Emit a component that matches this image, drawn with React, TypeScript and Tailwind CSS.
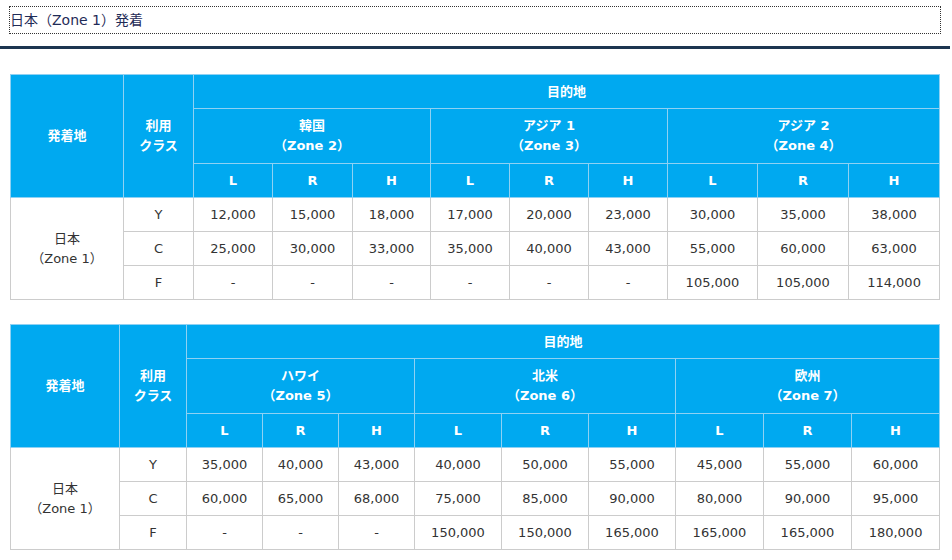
const font = {
  fontFamily: '"DejaVu Sans", "Noto Sans CJK JP", sans-serif',
};

type Zone = { name: string; zone: string };
type FareTable = {
  widths: number[];
  zones: Zone[];
  rows: { cls: string; fares: string[] }[];
};

const tables: FareTable[] = [
  {
    widths: [113, 70, 79, 80, 78, 79, 79, 79, 90, 91, 91],
    zones: [
      { name: "韓国", zone: "（Zone 2）" },
      { name: "アジア 1", zone: "（Zone 3）" },
      { name: "アジア 2", zone: "（Zone 4）" },
    ],
    rows: [
      { cls: "Y", fares: ["12,000", "15,000", "18,000", "17,000", "20,000", "23,000", "30,000", "35,000", "38,000"] },
      { cls: "C", fares: ["25,000", "30,000", "33,000", "35,000", "40,000", "43,000", "55,000", "60,000", "63,000"] },
      { cls: "F", fares: ["-", "-", "-", "-", "-", "-", "105,000", "105,000", "114,000"] },
    ],
  },
  {
    widths: [109, 67, 76, 76, 76, 87, 87, 87, 88, 88, 88],
    zones: [
      { name: "ハワイ", zone: "（Zone 5）" },
      { name: "北米", zone: "（Zone 6）" },
      { name: "欧州", zone: "（Zone 7）" },
    ],
    rows: [
      { cls: "Y", fares: ["35,000", "40,000", "43,000", "40,000", "50,000", "55,000", "45,000", "55,000", "60,000"] },
      { cls: "C", fares: ["60,000", "65,000", "68,000", "75,000", "85,000", "90,000", "80,000", "90,000", "95,000"] },
      { cls: "F", fares: ["-", "-", "-", "150,000", "150,000", "165,000", "165,000", "165,000", "180,000"] },
    ],
  },
];

const th = "border border-[#8fd1f3] bg-[#00a9f0] text-white font-bold text-center align-middle p-0";
const td = "border border-[#cccccc] text-[#333333] text-center align-middle p-0";

function Fares({ t }: { t: FareTable }) {
  return (
    <table
      className="ml-[10px] table-fixed border-collapse text-[13px] leading-[20px]"
      style={{ width: 929 }}
    >
      <colgroup>
        {t.widths.map((w, i) => (
          <col key={i} style={{ width: w }} />
        ))}
      </colgroup>
      <thead>
        <tr>
          <th rowSpan={3} className={th}>発着地</th>
          <th rowSpan={3} className={th}>
            利用
            <br />
            クラス
          </th>
          <th colSpan={9} className={`${th} h-[34px]`}>目的地</th>
        </tr>
        <tr>
          {t.zones.map((z) => (
            <th key={z.zone} colSpan={3} className={`${th} h-[55px]`}>
              {z.name}
              <br />
              {z.zone}
            </th>
          ))}
        </tr>
        <tr>
          {t.zones.flatMap((z) =>
            ["L", "R", "H"].map((k) => (
              <th key={z.zone + k} className={`${th} h-[34px]`}>{k}</th>
            ))
          )}
        </tr>
      </thead>
      <tbody>
        {t.rows.map((r, i) => (
          <tr key={r.cls}>
            {i === 0 && (
              <td rowSpan={3} className={td}>
                日本
                <br />
                （Zone 1）
              </td>
            )}
            <td className={`${td} h-[34px]`}>{r.cls}</td>
            {r.fares.map((f, j) => (
              <td key={j} className={td}>{f}</td>
            ))}
          </tr>
        ))}
      </tbody>
    </table>
  );
}

export default function App() {
  return (
    <div className="bg-white w-[952px] h-[560px] overflow-hidden" style={font}>
      <div className="ml-[9px] mt-[6px] w-[932px] h-[28px] border border-dotted border-[#333333] flex items-center">
        <h2 className="text-[14px] text-[#1f2b57] font-normal leading-none">日本（Zone 1）発着</h2>
      </div>
      <div className="mt-[12px] w-[950px] h-[3px] bg-[#1c3550]" />
      <div className="pt-[25px] flex flex-col gap-[24px]">
        {tables.map((t, i) => (
          <Fares key={i} t={t} />
        ))}
      </div>
    </div>
  );
}
